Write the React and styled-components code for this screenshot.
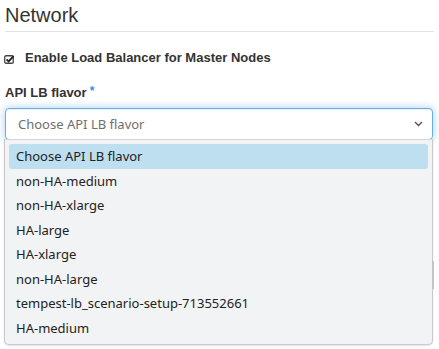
import React from "react";
import styled, { createGlobalStyle } from "styled-components";

const Global = createGlobalStyle`
  html, body { margin: 0; padding: 0; background: #fff; }
  body { font-family: "Liberation Sans", Arial, sans-serif; color: #333; }
`;

const Page = styled.div`
  width: 434px;
  min-height: 349px;
  box-sizing: border-box;
  padding: 4px 0 0 5px;
  display: flex;
  flex-direction: column;
`;

const Heading = styled.h3`
  margin: 0;
  font-size: 20px;
  line-height: 22px;
  font-weight: 400;
  color: #333;
  padding-bottom: 5px;
  border-bottom: 1px solid #e5e5e5;
`;

const CheckRow = styled.label`
  display: flex;
  align-items: center;
  margin-top: 17.5px;
  height: 16px;
  font-size: 13px;
  line-height: 16px;
  font-weight: 700;
  color: #333;
`;

const Box = styled.span`
  display: inline-flex;
  width: 11px;
  margin-right: 10px;
  margin-left: -1px;
  margin-top: 3px;
`;

const FieldLabel = styled.div`
  margin-top: 17px;
  font-size: 13px;
  line-height: 16px;
  font-weight: 700;
  color: #333;
`;

const Required = styled.span`
  color: #3a8fd6;
  font-size: 12px;
  margin-left: 3px;
  vertical-align: 2px;
`;

const SelectWrap = styled.div`
  position: relative;
  margin-top: 7.5px;
  margin-right: 1px;
`;

const SelectBox = styled.div`
  height: 32px;
  box-sizing: border-box;
  display: flex;
  align-items: center;
  justify-content: space-between;
  padding: 0 9px 0 12px;
  border: 1px solid #66afe9;
  border-radius: 4px;
  box-shadow: inset 0 1px 1px rgba(0,0,0,.075), 0 0 8px rgba(102,175,233,.6);
  font-family: "Noto Sans", "Open Sans", sans-serif;
  font-size: 13px;
  color: #6f6f6f;
  background: #fff;
`;

const Popup = styled.ul`
  position: absolute;
  z-index: 10;
  top: 31px;
  left: -1px;
  right: 0;
  margin: 0;
  padding: 4px 4px;
  list-style: none;
  background: #f2f3f5;
  border: 1px solid #c9c9cb;
  border-top-color: #d5d5d7;
  border-radius: 0 0 5px 5px;
  box-shadow: 0 1px 2px rgba(0,0,0,.12);
`;

const Option = styled.li`
  height: 24.5px;
  display: flex;
  align-items: center;
  padding-left: 7px;
  border-radius: 3px;
  font-family: "Noto Sans", "Open Sans", sans-serif;
  font-size: 13px;
  color: #222;
  background: ${(p) => (p.$active ? "#bddff0" : "transparent")};
`;

const Thumb = styled.span`
  position: absolute;
  right: -2px;
  top: 121px;
  width: 2px;
  height: 28px;
  background: #c4c4c6;
`;

const options = [
  "Choose API LB flavor",
  "non-HA-medium",
  "non-HA-xlarge",
  "HA-large",
  "HA-xlarge",
  "non-HA-large",
  "tempest-lb_scenario-setup-713552661",
  "HA-medium",
];

export default function App() {
  return (
    <>
      <Global />
      <Page>
        <Heading>Network</Heading>
        <CheckRow>
          <Box>
            <svg width="11" height="10" viewBox="0 0 11 10">
              <rect x="0.75" y="1.75" width="8.5" height="7.5" rx="1.2" fill="none" stroke="#444" strokeWidth="1.3" />
              <path d="M2.6 5.3 L4.6 7.3 L9.6 2.2" fill="none" stroke="#222" strokeWidth="1.9" />
            </svg>
          </Box>
          Enable Load Balancer for Master Nodes
        </CheckRow>
        <FieldLabel>
          API LB flavor<Required>*</Required>
        </FieldLabel>
        <SelectWrap>
          <SelectBox>
            <span>Choose API LB flavor</span>
            <svg width="9" height="6" viewBox="0 0 9 6">
              <path d="M1 1 L4.5 4.5 L8 1" fill="none" stroke="#555" strokeWidth="1.4" />
            </svg>
          </SelectBox>
          <Popup>
            {options.map((o, i) => (
              <Option key={o} $active={i === 0}>{o}</Option>
            ))}
            <Thumb />
          </Popup>
        </SelectWrap>
      </Page>
    </>
  );
}
